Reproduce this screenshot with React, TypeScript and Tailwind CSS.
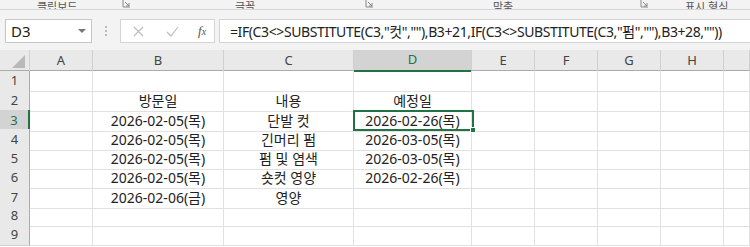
import React from 'react';

const cols = ['A', 'B', 'C', 'D', 'E', 'F', 'G', 'H', ''];
const rowHeights = [19, 20, 19, 19, 19, 20, 19, 19, 19];

const data: Record<number, [string, string, string]> = {
  2: ['방문일', '내용', '예정일'],
  3: ['2026-02-05(목)', '단발 컷', '2026-02-26(목)'],
  4: ['2026-02-05(목)', '긴머리 펌', '2026-03-05(목)'],
  5: ['2026-02-05(목)', '펌 및 염색', '2026-03-05(목)'],
  6: ['2026-02-05(목)', '숏컷 영양', '2026-02-26(목)'],
  7: ['2026-02-06(금)', '영양', ''],
};

const gridCols = 'grid grid-cols-[30px_63px_131px_130px_118px_63px_63px_63px_63px_1fr]';
const font = { fontFamily: '"Noto Sans", "Noto Sans CJK KR", sans-serif' };

const Launcher = () => (
  <svg width="9" height="8" viewBox="0 0 9 8" className="text-[#8a8a8a]">
    <path d="M1 0v7h7" fill="none" stroke="currentColor" strokeWidth="1" />
    <path d="M3 2l4 4M7 3v3H4" fill="none" stroke="currentColor" strokeWidth="1" />
  </svg>
);

export default function App() {
  const formula = '=IF(C3<>SUBSTITUTE(C3,"컷",""),B3+21,IF(C3<>SUBSTITUTE(C3,"펌",""),B3+28,""))';

  return (
    <div className="w-[750px] h-[247px] overflow-hidden bg-white text-[#222]" style={font}>
      {/* ribbon group labels, cut off at the top */}
      <div className="h-[10px] bg-[#f3f3f3] border-b border-[#d6d6d6] overflow-hidden text-[11px] text-[#555] leading-none">
        <div className="flex items-end h-[9px] whitespace-nowrap">
          <span className="ml-[37px] w-[44px] -mb-[3px]">클립보드</span>
          <span className="ml-[41px] mb-[1px] flex"><Launcher /></span>
          <span className="ml-[104px] w-[22px] -mb-[3px]">글꼴</span>
          <span className="ml-[108px] mb-[1px] flex"><Launcher /></span>
          <span className="ml-[119px] w-[22px] -mb-[3px]">맞춤</span>
          <span className="ml-[125px] mb-[1px] flex"><Launcher /></span>
          <span className="ml-[36px] -mb-[3px]">표시 형식</span>
        </div>
      </div>

      {/* formula bar */}
      <div className="h-[40px] bg-[#f3f3f3] flex items-start pt-[9px]">
        <div className="ml-[5px] w-[87px] h-[24px] bg-white border border-[#c6c6c6] flex items-center justify-between px-[5px] text-[15px]">
          <span>D3</span>
          <svg width="8" height="5" viewBox="0 0 8 5"><path d="M0 0h8L4 4z" fill="#777" /></svg>
        </div>
        <div className="w-[28px] h-[24px] flex flex-col items-center justify-center gap-[2px]">
          <span className="w-[2px] h-[2px] bg-[#bbb]" />
          <span className="w-[2px] h-[2px] bg-[#bbb]" />
          <span className="w-[2px] h-[2px] bg-[#bbb]" />
        </div>
        <div className="w-[95px] h-[24px] bg-white border border-[#d4d4d4] flex items-center">
          <svg width="11" height="11" viewBox="0 0 11 11" className="ml-[12px]">
            <path d="M1 1l9 9M10 1l-9 9" stroke="#bdbdbd" strokeWidth="1.2" />
          </svg>
          <svg width="13" height="11" viewBox="0 0 13 11" className="ml-[22px]">
            <path d="M1 6l4 4 7-9" fill="none" stroke="#bdbdbd" strokeWidth="1.2" />
          </svg>
          <span className="ml-[19px] text-[13px] italic text-[#555]" style={{ fontFamily: '"Liberation Serif", serif' }}>
            f<span className="text-[10px]">x</span>
          </span>
        </div>
        <div className="ml-[4px] flex-1 h-[24px] bg-white border border-[#d4d4d4] border-r-0 flex items-center pl-[10px] text-[14px] tracking-[-0.4px] whitespace-nowrap">
          {formula}
        </div>
      </div>

      {/* sheet */}
      <div className="relative">
        <div className={`${gridCols} h-[21px] bg-[#e9e9e9] border-b border-[#ababab] text-[13px] text-[#444]`}>
          <div className="relative border-r border-[#d0d0d0]">
            <svg width="13" height="13" viewBox="0 0 13 13" className="absolute right-[4px] bottom-[3px]">
              <path d="M13 0v13H0z" fill="#b9b9b9" />
            </svg>
          </div>
          {cols.map((c, i) =>
            c === 'D' ? (
              <div key={i} className="flex items-center justify-center bg-[#d3d3d3] border-r border-[#d0d0d0] border-b-2 border-b-[#217346] text-[#217346] -mb-px">
                {c}
              </div>
            ) : (
              <div key={i} className="flex items-center justify-center border-r border-[#d0d0d0]">
                {c}
              </div>
            )
          )}
        </div>

        {rowHeights.map((h, r) => {
          const n = r + 1;
          const row = data[n];
          const sel = n === 3;
          return (
            <div key={n} className={gridCols} style={{ height: h }}>
              <div
                className={
                  sel
                    ? 'flex items-center justify-center bg-[#d3d3d3] text-[#217346] border-r-2 border-[#217346] border-b border-b-[#d0d0d0] text-[13px]'
                    : 'flex items-center justify-center bg-[#e9e9e9] text-[#444] border-r border-[#ababab] border-b border-b-[#d0d0d0] text-[13px]'
                }
              >
                {n}
              </div>
              {cols.map((c, i) => {
                const val = row && i >= 1 && i <= 3 ? row[i - 1] : '';
                return (
                  <div
                    key={i}
                    className="flex items-center justify-center border-r border-b border-[#e1e1e1] text-[14px] whitespace-nowrap"
                  >
                    {val}
                  </div>
                );
              })}
            </div>
          );
        })}

        {/* active cell D3 */}
        <div className="absolute left-[353px] top-[60px] w-[121px] h-[21px] border-2 border-[#217346] pointer-events-none">
          <span className="absolute -right-[4px] -bottom-[4px] w-[6px] h-[6px] bg-[#217346] border border-white" />
        </div>
      </div>
    </div>
  );
}
